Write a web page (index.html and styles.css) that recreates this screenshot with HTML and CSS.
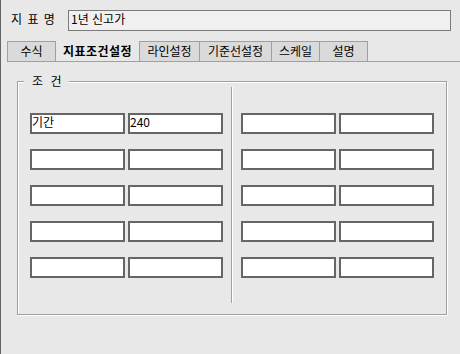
FILE: index.html
```html
<!DOCTYPE html>
<html lang="ko">
<head>
<meta charset="utf-8">
<link rel="stylesheet" href="styles.css">
</head>
<body>
<div class="header">
  <span class="title-label">지 표 명</span>
  <div class="title-input">1년 신고가</div>
</div>
<div class="tabbar">
  <div class="tab first w49">수식</div>
  <div class="tab active w83">지표조건설정</div>
  <div class="tab after-active w61">라인설정</div>
  <div class="tab w72">기준선설정</div>
  <div class="tab w48">스케일</div>
  <div class="tab w48">설명</div>
</div>
<div class="group">
  <span class="legend">조 건</span>
  <div class="group-body">
    <div class="fields">
      <div class="field">기간</div><div class="field">240</div>
      <div class="field"></div><div class="field"></div>
      <div class="field"></div><div class="field"></div>
      <div class="field"></div><div class="field"></div>
      <div class="field"></div><div class="field"></div>
    </div>
    <div class="sep"></div>
    <div class="fields">
      <div class="field"></div><div class="field"></div>
      <div class="field"></div><div class="field"></div>
      <div class="field"></div><div class="field"></div>
      <div class="field"></div><div class="field"></div>
      <div class="field"></div><div class="field"></div>
    </div>
  </div>
</div>
</body>
</html>
```
FILE: styles.css
```css
* { box-sizing: border-box; }
html, body { margin: 0; padding: 0; }
body {
  width: 460px;
  height: 354px;
  background: #e8e8e8;
  border-left: 1px solid #646464;
  font-family: "Noto Sans CJK KR", "Noto Sans", sans-serif;
  font-size: 12px;
  color: #000;
  overflow: hidden;
}
.header {
  display: flex;
  align-items: center;
  padding-top: 10px;
  padding-left: 10px;
}
.title-label {
  width: 57px;
  line-height: 14px;
  margin-top: -4px;
  word-spacing: 2px;
}
.title-input {
  width: 383px;
  height: 21px;
  border: 1px solid #7a7a7a;
  background: #f0f0f0;
  padding: 0 2px;
  line-height: 16px;
}
.tabbar {
  display: flex;
  margin-top: 10px;
  margin-left: 6px;
  border-bottom: 1px solid #a0a0a0;
}
.tab {
  height: 20px;
  border-top: 1px solid #a0a0a0;
  border-right: 1px solid #a0a0a0;
  background: #dadada;
  text-align: center;
  line-height: 18px;
}
.tab.first, .tab.after-active { border-left: 1px solid #a0a0a0; }
.tab.active {
  border: none;
  background: transparent;
  font-weight: bold;
  line-height: 20px;
  letter-spacing: 0.5px;
}
.w49 { width: 49px; }
.w83 { width: 83px; }
.w61 { width: 61px; }
.w72 { width: 72px; }
.w48 { width: 48px; }
.group {
  position: relative;
  margin-top: 19px;
  margin-left: 16px;
  width: 430px;
  height: 234px;
  border: 1px solid #a0a0a0;
  box-shadow: inset 1px 1px 0 #fff, 1px 1px 0 #fff;
  padding: 5px 12px 0 12px;
}
.legend {
  position: absolute;
  left: 6px;
  top: -8px;
  padding: 0 8px;
  background: #e8e8e8;
  line-height: 14px;
  word-spacing: 4px;
}
.group-body {
  display: flex;
  align-items: flex-start;
}
.fields {
  display: grid;
  grid-template-columns: 95px 95px;
  grid-auto-rows: 21px;
  column-gap: 3px;
  row-gap: 15px;
  padding-top: 26px;
}
.field {
  border: 2px solid #666;
  background: #fff;
  padding: 0;
  line-height: 14px;
}
.sep {
  width: 2px;
  height: 216px;
  margin: 0 8px;
  border-left: 1px solid #a0a0a0;
  border-right: 1px solid #fff;
}
```
